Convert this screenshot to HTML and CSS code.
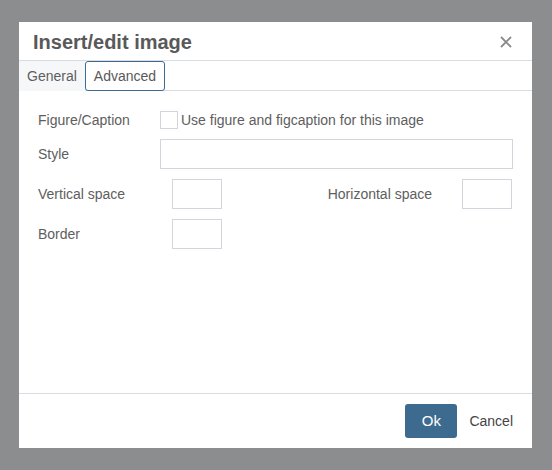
FILE: index.html
```html
<!DOCTYPE html>
<html>
<head>
<meta charset="utf-8">
<link rel="stylesheet" href="styles.css">
</head>
<body>
<div class="dialog">
  <div class="header">
    <div class="title">Insert/edit image</div>
    <svg class="close" width="12" height="12" viewBox="0 0 12 12"><path d="M1 1L11 11M11 1L1 11" stroke="#8a8a8a" stroke-width="1.8" fill="none"/></svg>
  </div>
  <div class="tabs">
    <div class="tab">General</div>
    <div class="tab active">Advanced</div>
  </div>
  <div class="body">
    <div class="row row-fig">
      <div class="label">Figure/Caption</div>
      <div class="check-wrap"><span class="checkbox"></span><span class="check-text">Use figure and figcaption for this image</span></div>
    </div>
    <div class="row row-style">
      <div class="label">Style</div>
      <div class="input wide"></div>
    </div>
    <div class="row4 row-space">
      <div class="label">Vertical space</div>
      <div class="input small"></div>
      <div class="label right">Horizontal space</div>
      <div class="input small"></div>
    </div>
    <div class="row4 row-space">
      <div class="label">Border</div>
      <div class="input small"></div>
    </div>
  </div>
  <div class="footer">
    <div class="btn-ok">Ok</div>
    <div class="btn-cancel">Cancel</div>
  </div>
</div>
</body>
</html>
```
FILE: styles.css
```css
html, body {
  margin: 0;
  padding: 0;
}
body {
  background: #8c8d8f;
  width: 552px;
  height: 470px;
  padding: 22px 0 0 19px;
  box-sizing: border-box;
  font-family: "Liberation Sans", Arial, sans-serif;
  font-size: 14px;
  color: #5e5e5e;
}
.dialog {
  width: 513px;
  height: 426px;
  background: #fff;
  display: flex;
  flex-direction: column;
}
.header {
  height: 38px;
  border-bottom: 1px solid #d9dce1;
  display: flex;
  align-items: center;
  justify-content: space-between;
  padding: 0 20px 0 14px;
}
.title {
  font-size: 20px;
  font-weight: bold;
  color: #595959;
  line-height: 24px;
  margin-top: 1px;
}
.close {
  display: block;
  margin-top: 1px;
}
.tabs {
  height: 29px;
  border-bottom: 1px solid #d9dce1;
  display: flex;
}
.tab {
  height: 30px;
  box-sizing: border-box;
  margin-bottom: -1px;
  padding: 0 7px;
  border: 1px solid transparent;
  line-height: 28px;
  background: #f6f7f8;
  color: #5e5e5e;
}
.tab.active {
  background: #fff;
  border: 1px solid #3c6a90;
  border-radius: 3px;
  padding: 0 8px;
  color: #595959;
}
.body {
  flex: 1;
  padding: 0 20px 0 19px;
}
.row {
  display: grid;
  grid-template-columns: 122px 1fr;
  align-items: center;
  height: 30px;
}
.row-fig {
  margin-top: 14px;
}
.row-style {
  margin-top: 4px;
}
.row4 {
  display: grid;
  grid-template-columns: 134px 50px 1fr 50px;
  align-items: center;
  height: 30px;
  margin-top: 10px;
}
.label {
  line-height: 16px;
}
.label.right {
  text-align: right;
  padding-right: 30px;
}
.check-wrap {
  display: flex;
  align-items: center;
}
.checkbox {
  width: 18px;
  height: 18px;
  box-sizing: border-box;
  border: 1px solid #d2d6dc;
  display: block;
}
.check-text {
  margin-left: 3px;
}
.input {
  height: 30px;
  box-sizing: border-box;
  border: 1px solid #d2d6dc;
  background: #fff;
}
.input.wide {
  width: 353px;
}
.input.small {
  width: 50px;
}
.footer {
  height: 54px;
  border-top: 1px solid #d9dce1;
  display: flex;
  align-items: center;
  justify-content: flex-end;
  padding-right: 19px;
}
.btn-ok {
  width: 52px;
  height: 34px;
  background: #3d6a8f;
  border-radius: 3px;
  color: #fff;
  font-size: 15px;
  line-height: 34px;
  text-align: center;
}
.btn-cancel {
  margin-left: 12px;
  color: #444;
  font-size: 14px;
}
```
